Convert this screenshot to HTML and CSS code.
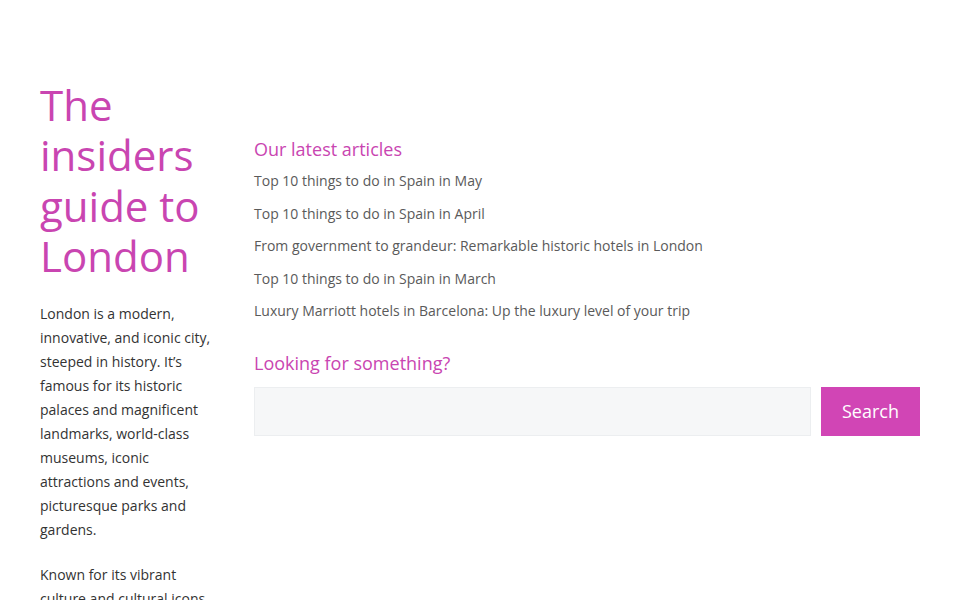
FILE: index.html
```html
<!DOCTYPE html>
<html>
<head>
  <title>The insiders guide to London</title>
  <link rel="stylesheet" href="styles.css">
</head>
<body>
  <div class="page">
    <div class="intro">
      <h1>The insiders guide to London</h1>
      <p>London is a modern, innovative, and iconic city, steeped in history. It’s famous for its historic palaces and magnificent landmarks, world-class museums, iconic attractions and events, picturesque parks and gardens.</p>
      <p>Known for its vibrant culture and cultural icons, London has something for everyone.</p>
    </div>

    <div class="main">
      <h2>Our latest articles</h2>
      <ul class="articles">
        <li><a href="#">Top 10 things to do in Spain in May</a></li>
        <li><a href="#">Top 10 things to do in Spain in April</a></li>
        <li><a href="#">From government to grandeur: Remarkable historic hotels in London</a></li>
        <li><a href="#">Top 10 things to do in Spain in March</a></li>
        <li><a href="#">Luxury Marriott hotels in Barcelona: Up the luxury level of your trip</a></li>
      </ul>

      <h2>Looking for something?</h2>
      <form class="search" onsubmit="return false">
        <input type="text" class="search-input">
        <button type="submit" class="search-button">Search</button>
      </form>
    </div>
  </div>
</body>
</html>
```

FILE: styles.css
```css
body {
  margin: 0;
  font-family: "Open Sans", sans-serif;
  color: #333;
  background: #fff;
}

.page {
  display: flex;
  gap: 40px;
  padding: 80px 40px 0;
}

.intro {
  width: 174px;
  flex-shrink: 0;
}

.intro h1 {
  margin: 0 0 21px;
  font-size: 42px;
  font-weight: 400;
  line-height: 50.3px;
  color: #c945b1;
}

.intro p {
  margin: 0 0 21px;
  font-size: 14px;
  line-height: 24px;
}

.main {
  flex: 1;
  padding-top: 57px;
}

.main h2 {
  margin: 0 0 10px;
  font-size: 18px;
  font-weight: 400;
  line-height: 24px;
  color: #c945b1;
}

.articles {
  list-style: none;
  margin: 0 0 30px;
  padding: 0;
}

.articles li {
  font-size: 14px;
  line-height: 20px;
  margin-bottom: 12.5px;
}

.articles a {
  color: #5a5a5a;
  text-decoration: none;
}

.search {
  display: flex;
  gap: 10px;
  margin-top: 12px;
}

.search-input {
  flex: 1;
  height: 49px;
  box-sizing: border-box;
  border: 1px solid #eceef0;
  background: #f6f7f8;
  font-family: inherit;
  font-size: 16px;
  padding: 0 12px;
}

.search-button {
  width: 99px;
  height: 49px;
  padding: 0 0 2px;
  border: none;
  background: #d145b5;
  color: #fff;
  font-family: inherit;
  font-size: 18px;
  cursor: pointer;
}
```
